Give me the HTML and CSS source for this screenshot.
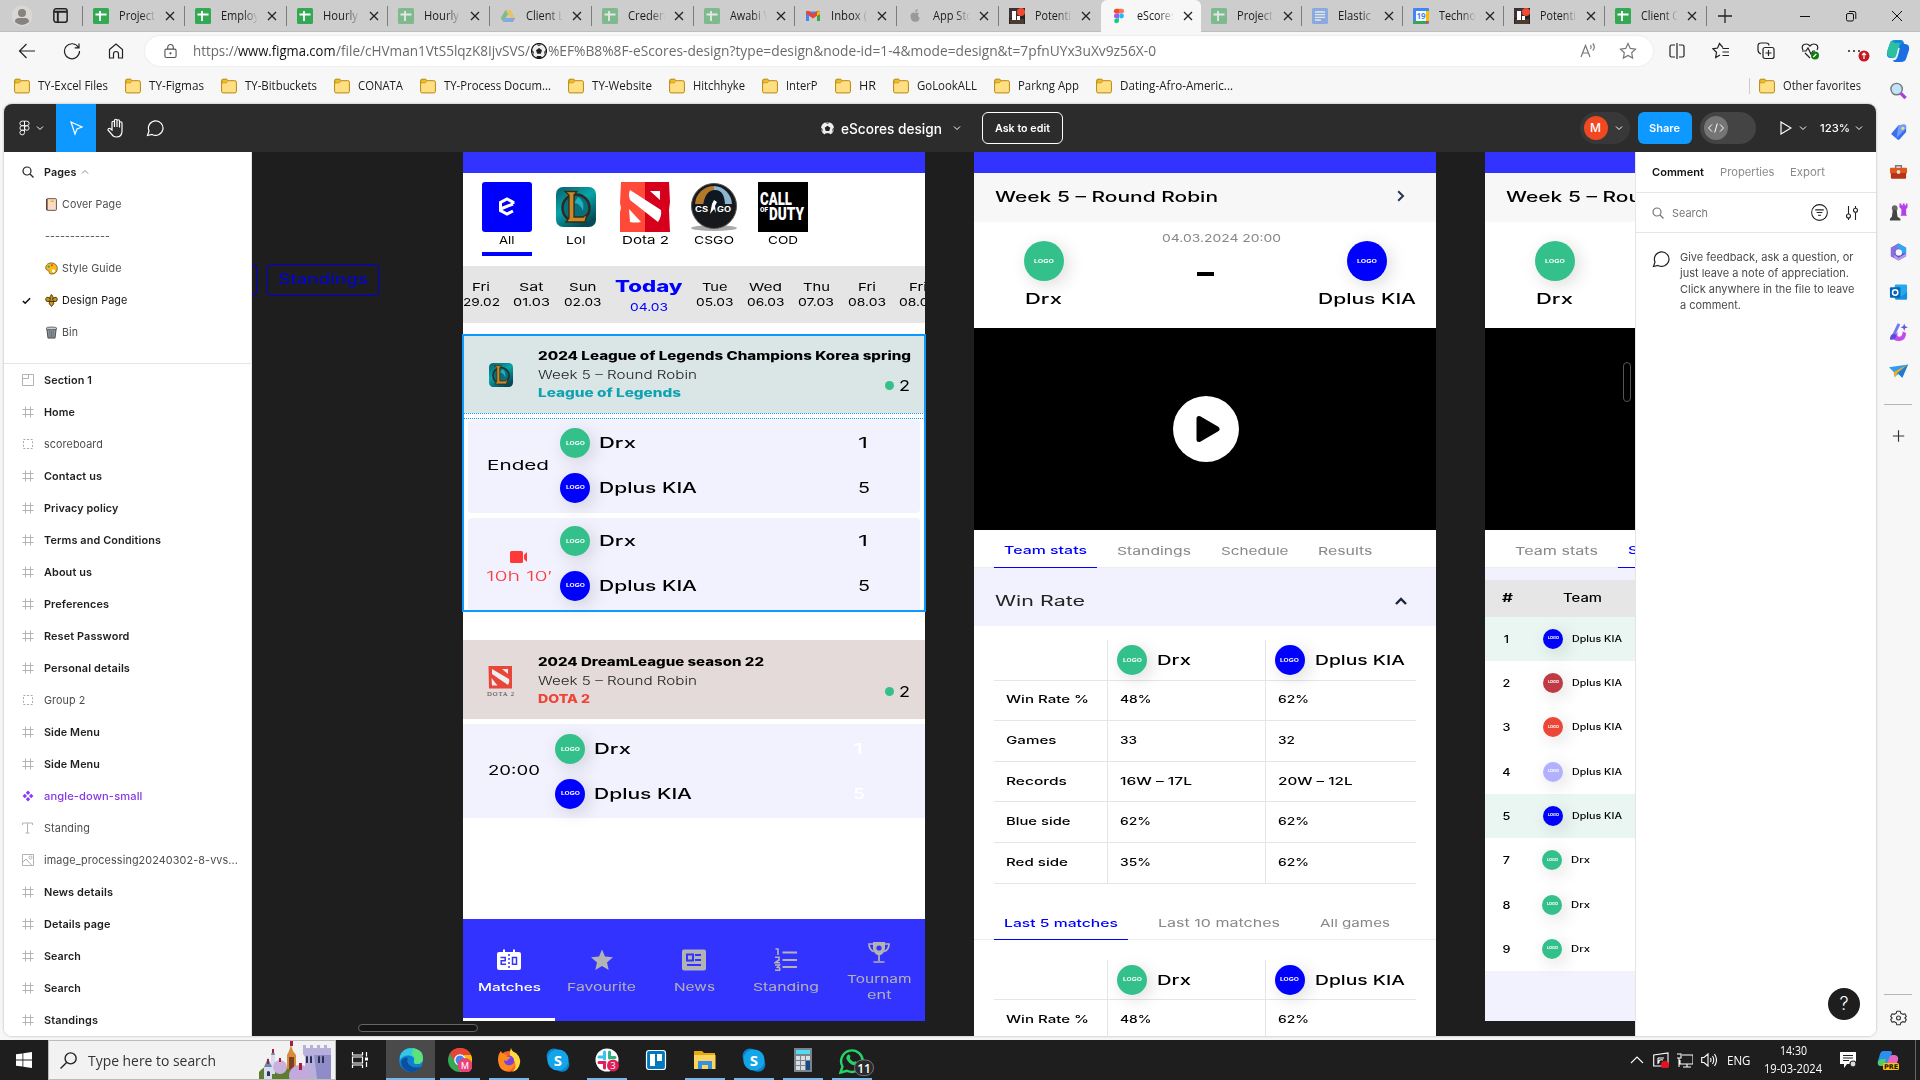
FILE: index.html
```html
<!DOCTYPE html>
<html lang="en">
<head>
<meta charset="utf-8">
<title>eScores design – Figma</title>
<link rel="stylesheet" href="styles.css">
</head>
<body>
<svg class="defs" aria-hidden="true">
  <symbol id="sheet" viewBox="0 0 16 16"><rect width="16" height="16" rx="1.5" fill="#34a853"/><path d="M2.5 6.5h11M7 3v10" stroke="#fff" stroke-width="1.8"/></symbol>
  <symbol id="folder" viewBox="0 0 16 16"><path d="M.6 3.8V2.6Q.6 1.2 2 1.200h3.600l1.600 1.500h6.600q1.600 0 1.600 1.500v9.200q0 1.500-1.600 1.500H2.200Q.6 14.900.6 13.400z" fill="#ffdf82" stroke="#b8860b"/><path d="M1 4.900h4.200l1.800-2-1.400-1.300H2Q1 1.600 1 2.600z" fill="#eebf30" stroke="#b8860b" stroke-width=".6"/></symbol>
  <symbol id="chev" viewBox="0 0 8 8"><path d="M1 2.500 4 5.500 7 2.500" fill="none" stroke="currentColor"/></symbol>
  <symbol id="hash" viewBox="0 0 12 12"><path d="M3.500.5v11M8.500.5v11M.5 3.500h11M.5 8.500h11" stroke="#b3b3b3" fill="none"/></symbol>
  <symbol id="dash" viewBox="0 0 12 12"><rect x="1.500" y="1.500" width="9" height="9" fill="none" stroke="#a8a8a8" stroke-dasharray="2 1.600"/></symbol>
  <symbol id="x" viewBox="0 0 10 10"><path d="M1 1l8 8M9 1l-8 8" stroke="#222" stroke-width="1.300"/></symbol>
  <symbol id="bubble" viewBox="0 0 18 18"><path d="M1.500 16.500 3 12A7.300 7.300 0 1 1 6 15.400L1.500 16.500z" fill="none" stroke="currentColor" stroke-width="1.200"/></symbol>
  <symbol id="mag" viewBox="0 0 12 12"><circle cx="5" cy="5" r="4" fill="none" stroke="currentColor" stroke-width="1.200"/><path d="M8 8l3.500 3.500" stroke="currentColor" stroke-width="1.200"/></symbol>
  <symbol id="lol" viewBox="0 0 40 40"><defs><linearGradient id="lg" x2=".6" y2="1"><stop stop-color="#075f6c"/><stop offset=".5" stop-color="#08a5aa"/><stop offset="1" stop-color="#044b57"/></linearGradient></defs><rect width="40" height="40" rx="7" fill="url(#lg)"/><circle cx="20" cy="21" r="13.500" fill="#08707c" stroke="#2c2a22" stroke-width="2.500"/><path d="M22 10q7 4 5 14-3-8-9-8z" fill="#1fb0b8"/><path d="M9 4.500h12l-3 3.500V30h9l4-3-2 8H10l3-4V8z" fill="#c98a2b" stroke="#3a2a10" stroke-width="1.300"/></symbol>
  <symbol id="photo" viewBox="0 0 16 16"><rect width="16" height="16" fill="#2b2024"/><rect width="9" height="10" fill="#3d3036"/><path d="M1 11h14v5H1z" fill="#4a3a30"/><path d="M3 3h4v9H3zM8 8h3v4H8z" fill="#fff"/><circle cx="12" cy="4" r="4" fill="#ee4b35"/></symbol>
  <symbol id="skype" viewBox="0 0 24 24"><circle cx="8" cy="8" r="7.500" fill="#0a84c8"/><circle cx="16" cy="16.500" r="7.300" fill="#0a84c8"/><circle cx="12" cy="12" r="10.600" fill="#12a5ea"/><text x="12" y="17.500" text-anchor="middle" font-family="Open Sans,sans-serif" font-weight="700" font-size="15" fill="#fff">S</text></symbol>
  <symbol id="ball" viewBox="0 0 16 16"><circle cx="8" cy="8" r="7.500" fill="#eee" stroke="#111"/><path d="M8 5l3 2.200-1.200 3.500H6.200L5 7.200zM5 1.500 8 3l3-1.500zM.7 7l2 1.500L2.500 12zM15.300 7l-2 1.500.2 3.500zM5 15l1-2h4l1 2z" fill="#222"/></symbol>
</svg>

<header class="tabs">
  <svg class="profile" viewBox="0 0 22 22"><circle cx="11" cy="11" r="10.500" fill="#dad6d2"/><circle cx="11" cy="8" r="4" fill="#858381"/><path d="M4 17q0-4 4-4h6q4 0 4 4-7 6-14 0z" fill="#858381"/></svg>
  <svg class="workspace" viewBox="0 0 14 14"><rect x=".8" y=".8" width="12.400" height="12.400" rx="2" fill="none" stroke="#222" stroke-width="1.400"/><path d="M1 3.500h12M4.500 3.500v9.500" stroke="#222" stroke-width="1.800"/></svg>
  <div class="tab"><svg><use href="#sheet"/></svg><b><i data-w="36">Project</i></b><svg class="x"><use href="#x"/></svg></div>
  <div class="tab"><svg><use href="#sheet"/></svg><b><i data-w="38">Employ</i></b><svg class="x"><use href="#x"/></svg></div>
  <div class="tab"><svg><use href="#sheet"/></svg><b><i data-w="35">Hourly</i></b><svg class="x"><use href="#x"/></svg></div>
  <div class="tab idle"><svg><use href="#sheet"/></svg><b><i data-w="35">Hourly</i></b><svg class="x"><use href="#x"/></svg></div>
  <div class="tab idle"><svg viewBox="0 0 16 16"><path d="M5.500 2h5L8 6.200 3.200 14 .7 10z" fill="#34a853"/><path d="M5.500 2h5l5 8.300h-5z" fill="#fbbc04"/><path d="M5.600 10h9.800L13 14H3.200z" fill="#4285f4"/></svg><b><i data-w="38">Client L</i></b><svg class="x"><use href="#x"/></svg></div>
  <div class="tab idle"><svg><use href="#sheet"/></svg><b><i data-w="38">Creden</i></b><svg class="x"><use href="#x"/></svg></div>
  <div class="tab idle"><svg><use href="#sheet"/></svg><b><i data-w="40">Awabi V</i></b><svg class="x"><use href="#x"/></svg></div>
  <div class="tab"><svg viewBox="0 0 16 16"><path d="M1 3.500V13h3V7l4 3 4-3v6h3V3.500z" fill="#4285f4"/><path d="M12 7v6h3V4z" fill="#34a853"/><path d="M1 3.500Q3 2 4.500 3.500L8 6l3.500-2.500Q13 2 15 3.500v2L8 10.500l-7-5z" fill="#ea4335"/><path d="M12 4.500Q14 2 15 4v2l-3 2z" fill="#fbbc04"/></svg><b><i data-w="36">Inbox (</i></b><svg class="x"><use href="#x"/></svg></div>
  <div class="tab"><svg viewBox="0 0 16 16"><path d="M10.800 1q.2 2.500-2.600 3.200Q8 1.800 10.800 1zM8.200 5q2-1.100 3.800.4-2.300 2 .8 4.800-1.800 4.600-4.300 3.200-2.600 1.600-4.300-2.200Q2.500 6.500 5 5q1.400-.8 3.200 0z" fill="#999"/></svg><b><i data-w="40">App Sto</i></b><svg class="x"><use href="#x"/></svg></div>
  <div class="tab"><svg><use href="#photo"/></svg><b><i data-w="36">Potenti</i></b><svg class="x"><use href="#x"/></svg></div>
  <div class="tab active"><svg viewBox="0 0 16 16"><path d="M8 .8H5.300a2.400 2.400 0 0 0 0 4.800H8z" fill="#f24e1e"/><path d="M8 .8h2.700a2.400 2.400 0 0 1 0 4.800H8z" fill="#ff7262"/><path d="M8 5.600H5.300a2.400 2.400 0 0 0 0 4.800H8z" fill="#a259ff"/><circle cx="10.500" cy="8" r="2.400" fill="#1abcfe"/><path d="M8 10.400H5.300A2.400 2.400 0 1 0 8 12.800z" fill="#0acf83"/></svg><b><i data-w="39">eScores</i></b><svg class="x"><use href="#x"/></svg></div>
  <div class="tab idle late"><svg><use href="#sheet"/></svg><b><i data-w="36">Project</i></b><svg class="x"><use href="#x"/></svg></div>
  <div class="tab idle late"><svg viewBox="0 0 16 16"><rect width="16" height="16" rx="1.500" fill="#4a86f0"/><path d="M3 4h10M3 6.700h10M3 9.400h10M3 12h6" stroke="#fff" stroke-width="1.300"/></svg><b><i data-w="33">Elastic</i></b><svg class="x"><use href="#x"/></svg></div>
  <div class="tab late"><svg viewBox="0 0 16 16"><rect width="16" height="16" rx="1" fill="#4285f4"/><path d="M13 3h3v10h-3z" fill="#fbbc04"/><path d="M0 13h13v3H0z" fill="#34a853"/><path d="M13 13h3l-3 3z" fill="#ea4335"/><path d="M3 3h10v10H3z" fill="#fff"/><text x="8" y="11" text-anchor="middle" font-size="8" font-weight="700" font-family="Open Sans,sans-serif" fill="#4285f4">19</text></svg><b><i data-w="37">Techno</i></b><svg class="x"><use href="#x"/></svg></div>
  <div class="tab late"><svg><use href="#photo"/></svg><b><i data-w="36">Potenti</i></b><svg class="x"><use href="#x"/></svg></div>
  <div class="tab late"><svg><use href="#sheet"/></svg><b><i data-w="38">Client C</i></b><svg class="x"><use href="#x"/></svg></div>
  <div class="newtab"><svg viewBox="0 0 14 14"><path d="M7 0v14M0 7h14" stroke="#222" stroke-width="1.300"/></svg></div>
  <div class="winctl">
    <svg viewBox="0 0 12 12"><path d="M1 6.500h10" stroke="#111"/></svg>
    <svg viewBox="0 0 12 12"><rect x="1.500" y="3.500" width="7" height="7.500" rx="1.500" fill="none" stroke="#111"/><path d="M4 1.500h5q1.800 0 1.800 1.800V9" fill="none" stroke="#111"/></svg>
    <svg viewBox="0 0 12 12"><path d="M1 1l10 10M11 1L1 11" stroke="#111"/></svg>
  </div>
</header>

<div class="navbar">
  <svg viewBox="0 0 18 18"><path d="M17 9H1.500M8.500 2l-7 7 7 7" /></svg>
  <svg viewBox="0 0 18 18"><path d="M15.500 5.500A7.500 7.500 0 1 0 16.500 9M16 1.500v4.300h-4.300"/></svg>
  <svg viewBox="0 0 18 18"><path d="M2.500 7.500 9 2l6.500 5.500V16H11.500v-4q0-2.500-2.500-2.500T6.500 12v4h-4z"/></svg>
  <div class="address">
    <svg class="lock" viewBox="0 0 14 16"><rect x="1" y="6" width="12" height="9" rx="1.500"/><path d="M4 6V4a3 3 0 0 1 6 0v2"/><circle cx="7" cy="10.500" r=".6" fill="#555"/></svg>
    <span class="url"><i data-w="45.500">https://</i><i class="host" data-w="97.500">www.figma.com</i><i data-w="194">/file/cHVman1VtS5lqzK8IjvSVS/</i><svg><use href="#ball"/></svg><i data-w="608">%EF%B8%8F-eScores-design?type=design&amp;node-id=1-4&amp;mode=design&amp;t=7pfnUYx3uXv9z56X-0</i></span>
    <svg class="aloud" viewBox="0 0 18 18"><path d="M2 15 6.500 3.500 11 15M3.500 11h6M11.500 3q1.500 2 0 4M13.800 1.500q3 3.500 0 7"/></svg>
    <svg class="star" viewBox="0 0 18 18"><path d="M9 1.500l2.300 4.900 5.200.7-3.800 3.700.9 5.300L9 13.500l-4.600 2.600.9-5.300L1.500 7.100l5.200-.7z"/></svg>
  </div>
  <div class="tools">
    <svg viewBox="0 0 18 18"><path d="M7 3H3.500Q2 3 2 4.500v9Q2 15 3.500 15H7M11 3h3.500Q16 3 16 4.500v9q0 1.500-1.500 1.500H11M9 1v16"/></svg>
    <svg viewBox="0 0 18 18"><path d="M11 5.700 7.500 1.500 5.600 6 1 6.800l3.500 3.500-.8 5.200L8 13M10.500 6.500H17M10.500 10H17M10.500 13.500H17"/></svg>
    <svg viewBox="0 0 18 18"><path d="M4 12Q1 11 1 8V4q0-3 3-3h5q3 0 3 2.500"/><rect x="6" y="5.500" width="11" height="11" rx="2"/><path d="M11.500 8v6M8.500 11h6"/></svg>
    <svg viewBox="0 0 18 18"><path d="M2 8Q0 4 3 2.500 6.500 1 9 4q2.500-3 6-1.500Q18 4 16 8M1 9h4l2-3 3 6 2-3h2M4 11l5 5"/><circle cx="14" cy="13.500" r="4" fill="#107c10" stroke="none"/><path d="M12.300 15l3-3" stroke="#fff"/></svg>
    <svg class="more" viewBox="0 0 24 24"><circle cx="3" cy="12" r="1" fill="#222" stroke="none"/><circle cx="8" cy="12" r="1" fill="#222" stroke="none"/><circle cx="13" cy="12" r="1" fill="#222" stroke="none"/><circle cx="18" cy="17" r="5.500" fill="#c4191f" stroke="none"/><path d="M18 20v-6M16 16l2-2 2 2" stroke="#fff"/></svg>
    <svg class="copilot" viewBox="0 0 24 24"><path d="M9 1h6q2 0 2.600 2L20 9 12 13 8 19H5Q0 19 1 13L4 4Q5 1 9 1z" fill="#1489d8"/><path d="M9 4h5L10 18Q9 22 5 18 1 18 1 13l3-9Q5 1 9 4z" fill="#2cc0a0"/><path d="M15 5h4q5 0 4 6l-3 9q-1 3-5 3H9q-2 0-2-2 3 1 4-3z" fill="#1b6fe0"/><path d="M13 9l-2 8q-1 3-4 3" stroke="#e8f6ff" stroke-width="1.500"/></svg>
  </div>
</div>

<nav class="bookmarks">
  <span><svg><use href="#folder"/></svg><i data-w="70">TY-Excel Files</i></span>
  <span><svg><use href="#folder"/></svg><i data-w="55">TY-Figmas</i></span>
  <span><svg><use href="#folder"/></svg><i data-w="72">TY-Bitbuckets</i></span>
  <span><svg><use href="#folder"/></svg><i data-w="45">CONATA</i></span>
  <span><svg><use href="#folder"/></svg><i data-w="107">TY-Process Docum...</i></span>
  <span><svg><use href="#folder"/></svg><i data-w="60">TY-Website</i></span>
  <span><svg><use href="#folder"/></svg><i data-w="52">Hitchhyke</i></span>
  <span><svg><use href="#folder"/></svg><i data-w="31.500">InterP</i></span>
  <span><svg><use href="#folder"/></svg><i data-w="17">HR</i></span>
  <span><svg><use href="#folder"/></svg><i data-w="60">GoLookALL</i></span>
  <span><svg><use href="#folder"/></svg><i data-w="61">Parkng App</i></span>
  <span><svg><use href="#folder"/></svg><i data-w="113">Dating-Afro-Americ...</i></span>
  <span class="other"><svg><use href="#folder"/></svg><i data-w="78">Other favorites</i></span>
</nav>

<div class="middle">
<main class="figma">
  <div class="ftool">
    <div class="fmenu"><svg class="flogo" viewBox="0 0 12 16"><g fill="none" stroke="#fff"><path d="M6 .5H3.500a2.500 2.500 0 0 0 0 5H6zM6 .5h2.500a2.500 2.500 0 0 1 0 5H6zM6 5.500H3.500a2.500 2.500 0 0 0 0 5H6z"/><circle cx="8.500" cy="8" r="2.500"/><path d="M6 10.500H3.500A2.500 2.500 0 1 0 6 13z"/></g></svg><svg class="c8"><use href="#chev"/></svg></div>
    <div class="fsel"><svg viewBox="0 0 16 16"><path d="M3 2l11 5-5 2-2 5z" fill="none" stroke="#fff" stroke-width="1.200"/></svg></div>
    <div class="fbtn"><svg viewBox="0 0 20 20"><path d="M6 12V4.500a1.200 1.200 0 0 1 2.500 0V9 2.500a1.200 1.200 0 0 1 2.500 0V9 3a1.200 1.200 0 0 1 2.500 0v6.500V5a1.200 1.200 0 0 1 2.500 0v8q0 6-5.500 6-3.500 0-5-3l-3.500-4q0-2 2-1.500z" fill="none" stroke="#fff" stroke-width="1.200"/></svg></div>
    <div class="fbtn"><svg class="s18"><use href="#bubble"/></svg></div>
    <div class="ftitle"><svg><use href="#ball"/></svg><i data-w="101">eScores design</i><svg class="c8"><use href="#chev"/></svg><span class="ask"><i data-w="55">Ask to edit</i></span></div>
    <div class="fright">
      <div class="who"><em>M</em><svg class="c8"><use href="#chev"/></svg></div>
      <div class="share"><i data-w="31">Share</i></div>
      <div class="toggle"><svg viewBox="0 0 24 24"><circle cx="12" cy="12" r="12" fill="#757575"/><path d="M8 8.500 4.500 12 8 15.500M16 8.500l3.500 3.500-3.500 3.500M13.300 7.500l-2.600 9" fill="none" stroke="#fff"/></svg></div>
      <svg class="play" viewBox="0 0 12 14"><path d="M1 1l10 6-10 6z" fill="none" stroke="#fff" stroke-width="1.200"/></svg>
      <svg class="c8"><use href="#chev"/></svg>
      <i class="zoom" data-w="30">123%</i>
      <svg class="c8 last"><use href="#chev"/></svg>
    </div>
  </div>

  <div class="fbody">
    <aside class="left">
      <div class="pages">
        <div class="row strong"><svg class="dark"><use href="#mag"/></svg><i data-w="32.500">Pages</i><svg class="c8 up"><use href="#chev"/></svg></div>
        <div class="row page"><svg viewBox="0 0 12 14"><rect x=".7" y=".7" width="10.600" height="12.600" rx="1" fill="#fadcc6" stroke="#5c4a40"/><path d="M1 1v12" stroke="#5c3a2a" stroke-width="1.500"/><path d="M5 3.500h3.500" stroke="#f0b400" stroke-width="1.800"/></svg><i data-w="59.500">Cover Page</i></div>
        <div class="row page"><i data-w="65">-------------</i></div>
        <div class="row page"><svg viewBox="0 0 14 14"><path d="M7 1C2 1 .5 4.500.8 7 1.200 9 3 8.500 4 9.500c1 1.200 0 3.500 3 3.500 4 0 6.300-2.500 6.300-6S10.500 1 7 1z" fill="#fbb81b" stroke="#5c4a20" stroke-width=".8"/><circle cx="4" cy="5" r="1.200" fill="#34a853"/><circle cx="7.500" cy="3.500" r="1.200" fill="#ea4335"/><circle cx="9" cy="9.500" r="1.700" fill="#fff"/></svg><i data-w="59.500">Style Guide</i></div>
        <div class="row page current"><svg class="tick" viewBox="0 0 10 10"><path d="M1 5.500 3.500 8 9 2.500" fill="none" stroke="#111" stroke-width="1.800"/></svg><svg viewBox="0 0 14 14"><path d="M7 .5q3 3 1.200 5.500Q9 3 12 3.500q2 1 .8 4-2 1.500-4-.2l.7 3.200-2.500 3-2.500-3 .7-3.200q-2 1.700-4 .2-1.200-3 .8-4Q5 3 5.800 6 4 3.500 7 .5z" fill="#c9951e" stroke="#3d2c08" stroke-width=".9"/><path d="M3.500 8h7" stroke="#3d2c08"/></svg><i data-w="65.500">Design Page</i></div>
        <div class="row page"><svg viewBox="0 0 14 14"><path d="M2 3h10l-1.200 10H3.200z" fill="#8b949a" stroke="#444"/><ellipse cx="7" cy="2.600" rx="5.800" ry="1.500" fill="#c8cdd0" stroke="#444" stroke-width=".8"/><path d="M5 5l.5 7M7 5v7M9 5l-.5 7" stroke="#5d6468" stroke-width=".7"/></svg><i data-w="16">Bin</i></div>
      </div>
      <div class="layers">
        <div class="row strong"><svg viewBox="0 0 12 12"><path d="M.5.5h11v11H.5zM.5 4.500h6v-4" fill="none" stroke="#b3b3b3"/></svg><i data-w="48">Section 1</i></div>
        <div class="row strong"><svg><use href="#hash"/></svg><i data-w="31">Home</i></div>
        <div class="row"><svg><use href="#dash"/></svg><i data-w="59">scoreboard</i></div>
        <div class="row strong"><svg><use href="#hash"/></svg><i data-w="58">Contact us</i></div>
        <div class="row strong"><svg><use href="#hash"/></svg><i data-w="74.500">Privacy policy</i></div>
        <div class="row strong"><svg><use href="#hash"/></svg><i data-w="117">Terms and Conditions</i></div>
        <div class="row strong"><svg><use href="#hash"/></svg><i data-w="48">About us</i></div>
        <div class="row strong"><svg><use href="#hash"/></svg><i data-w="65">Preferences</i></div>
        <div class="row strong"><svg><use href="#hash"/></svg><i data-w="85.500">Reset Password</i></div>
        <div class="row strong"><svg><use href="#hash"/></svg><i data-w="86">Personal details</i></div>
        <div class="row"><svg><use href="#dash"/></svg><i data-w="41.500">Group 2</i></div>
        <div class="row strong"><svg><use href="#hash"/></svg><i data-w="56">Side Menu</i></div>
        <div class="row strong"><svg><use href="#hash"/></svg><i data-w="56">Side Menu</i></div>
        <div class="row comp"><svg viewBox="0 0 12 12"><path d="M6 .6 8.200 2.800 6 5 3.800 2.800zM6 7l2.200 2.200L6 11.400 3.800 9.200zM2.800 3.800 5 6 2.800 8.200.6 6zM9.200 3.800 11.400 6 9.200 8.200 7 6z" fill="#8a38f5"/></svg><i data-w="98.500">angle-down-small</i></div>
        <div class="row"><svg viewBox="0 0 12 12"><path d="M.5 3V1h10v2M5.500 1v10M3.500 11h4" fill="none" stroke="#b3b3b3"/></svg><i data-w="46">Standing</i></div>
        <div class="row"><svg viewBox="0 0 12 12"><path d="M.5.5h11v11H.5zM1 8l3-3 5.500 6" fill="none" stroke="#b3b3b3"/><circle cx="8.500" cy="3.500" r="1.500" fill="none" stroke="#b3b3b3"/></svg><i data-w="194">image_processing20240302-8-vvs...</i></div>
        <div class="row strong"><svg><use href="#hash"/></svg><i data-w="69">News details</i></div>
        <div class="row strong"><svg><use href="#hash"/></svg><i data-w="66.500">Details page</i></div>
        <div class="row strong"><svg><use href="#hash"/></svg><i data-w="37">Search</i></div>
        <div class="row strong"><svg><use href="#hash"/></svg><i data-w="37">Search</i></div>
        <div class="row strong"><svg><use href="#hash"/></svg><i data-w="54">Standings</i></div>
      </div>
    </aside>

    <section class="canvas">
      <div class="label-cut"></div>
      <div class="label"><i data-w="90">Standings</i></div>

      <article class="board home">
        <div class="bluebar"></div>
        <div class="games">
          <div class="game on"><svg viewBox="0 0 50 50"><rect width="50" height="50" rx="3" fill="#00f"/><path d="M31 22v-1.800L25 17l-6.500 3.500v8L25 32l6-3M18.500 27l12.500-5" fill="none" stroke="#fff" stroke-width="3"/></svg><i data-w="15.500">All</i></div>
          <div class="game"><svg viewBox="-5 -5 50 50"><use href="#lol" width="40" height="40"/></svg><i data-w="19.500">Lol</i></div>
          <div class="game"><svg viewBox="0 0 50 50"><path d="M1 0h24v50H0V30l1-4-1-5z" fill="#ff4a3a"/><path d="M25 0h24l1 20-1 8 1 22H25z" fill="#d6001c"/><path d="M10 8l31 20q1 6-3 12L10 18q-2-6 0-10zM30 9h10v9zM9 27l12 13q-6 1-11 0z" fill="#fff"/></svg><i data-w="47">Dota 2</i></div>
          <div class="game"><svg viewBox="0 0 50 50"><ellipse cx="25" cy="46" rx="23" ry="3" fill="#aaa"/><circle cx="25" cy="24" r="22.500" fill="#16181b" stroke="#555"/><path d="M6 22A19 19 0 0 1 25 4v18z" fill="#b3782a"/><path d="M25 4a19 19 0 0 1 18 18H25z" fill="#8db6cc"/><path d="M14 24q2-16 12-16t10 16z" fill="#0d1822"/><path d="M25 18l3 2-2 4 1 7-2-4-4 5 2-10z" fill="#fff"/><text x="6" y="29.500" font-family="Inter,sans-serif" font-weight="700" font-size="7" textLength="13" lengthAdjust="spacingAndGlyphs" fill="#fff">CS</text><text x="28" y="29.500" font-family="Inter,sans-serif" font-weight="700" font-size="7" textLength="14" lengthAdjust="spacingAndGlyphs" fill="#fff">GO</text></svg><i data-w="40">CSGO</i></div>
          <div class="game"><svg viewBox="0 0 50 50"><rect width="50" height="50" fill="#000"/><g font-family="Roboto,sans-serif" font-weight="900" fill="#fff"><text x="2" y="22.500" font-size="17.500" textLength="32" lengthAdjust="spacingAndGlyphs">CALL</text><text x="2" y="30" font-size="7" textLength="8" lengthAdjust="spacingAndGlyphs">OF</text><text x="11" y="38" font-size="17.500" textLength="35" lengthAdjust="spacingAndGlyphs">DUTY</text></g></svg><i data-w="30">COD</i></div>
        </div>
        <div class="days">
          <div><i data-w="18">Fri</i><i data-w="37">29.02</i></div>
          <div><i data-w="24.500">Sat</i><i data-w="37">01.03</i></div>
          <div><i data-w="27.500">Sun</i><i data-w="37.500">02.03</i></div>
          <div class="today"><i data-w="67.500">Today</i><i data-w="38">04.03</i></div>
          <div><i data-w="25.500">Tue</i><i data-w="37.500">05.03</i></div>
          <div><i data-w="33">Wed</i><i data-w="37.500">06.03</i></div>
          <div><i data-w="27">Thu</i><i data-w="36">07.03</i></div>
          <div><i data-w="18">Fri</i><i data-w="38">08.03</i></div>
          <div><i data-w="18">Fri</i><i data-w="38">08.03</i></div>
        </div>
        <div class="league lolbg">
          <svg class="lmark"><use href="#lol"/></svg>
          <div class="ltext"><i class="bold" data-w="373">2024 League of Legends Champions Korea spring</i><i class="thin" data-w="159">Week 5 – Round Robin</i><i class="bold teal" data-w="143">League of Legends</i></div>
          <div class="count"><u></u><i data-w="11">2</i></div>
        </div>
        <div class="match boxed">
          <div class="status"><i data-w="62">Ended</i></div>
          <div class="teams">
            <div><span class="logo"><i data-w="19">LOGO</i></span><i class="name" data-w="37">Drx</i></div>
            <div><span class="logo blue"><i data-w="19">LOGO</i></span><i class="name" data-w="98">Dplus KIA</i></div>
          </div>
          <div class="score"><i data-w="10">1</i><i data-w="12">5</i></div>
        </div>
        <div class="match boxed">
          <div class="status live"><svg viewBox="0 0 17 12"><rect width="13" height="12" rx="1.500" fill="#ff3838"/><path d="M17 1v10l-3-3V4z" fill="#ff3838"/></svg><i data-w="66">10h 10′</i></div>
          <div class="teams">
            <div><span class="logo"><i data-w="19">LOGO</i></span><i class="name" data-w="37">Drx</i></div>
            <div><span class="logo blue"><i data-w="19">LOGO</i></span><i class="name" data-w="98">Dplus KIA</i></div>
          </div>
          <div class="score"><i data-w="10">1</i><i data-w="12">5</i></div>
        </div>
        <div class="league dotabg">
          <svg class="lmark dota" viewBox="0 0 27 31"><path d="M1.500 1h23.500v22.500H2z" fill="#e8463a"/><path d="M5 4l17 10q1 3-1 6L5 9zM15 4h6v5zM4.500 13l6 7.500H5z" fill="#eee"/><text x="0" y="30.500" textLength="27" font-family="Liberation Serif,serif" font-size="6.500" fill="#444">DOTA 2</text></svg>
          <div class="ltext"><i class="bold" data-w="226">2024 DreamLeague season 22</i><i class="thin" data-w="159">Week 5 – Round Robin</i><i class="bold red" data-w="52">DOTA 2</i></div>
          <div class="count"><u></u><i data-w="11">2</i></div>
        </div>
        <div class="match full">
          <div class="status"><i data-w="52">20:00</i></div>
          <div class="teams">
            <div><span class="logo"><i data-w="19">LOGO</i></span><i class="name" data-w="37">Drx</i></div>
            <div><span class="logo blue"><i data-w="19">LOGO</i></span><i class="name" data-w="98">Dplus KIA</i></div>
          </div>
          <div class="score"><i data-w="10">1</i><i data-w="12">5</i></div>
        </div>
        <div class="bottomnav">
          <div class="on"><svg viewBox="0 0 24 24"><path d="M2 4h4V1.500h2V4h8V1.500h2V4h4q2 0 2 2v14q0 2-2 2H2q-2 0-2-2V6q0-2 2-2z" fill="#fff"/><path d="M3.500 9.500h4.700v3.200H4.200v3.500h4.800M15.500 9.500h4v6.700h-4zM12 6v2M12 10v2M12 14v2M12 18v2" fill="none" stroke="#33f" stroke-width="1.500"/></svg><i data-w="63">Matches</i></div>
          <div><svg viewBox="0 0 24 24"><path d="M12 1.500l3 7 8 .8-6 5.200 1.700 7.500-6.700-4-6.700 4L7 14.500 1 9.300l8-.8z" fill="#b3b3b3"/></svg><i data-w="69">Favourite</i></div>
          <div><svg viewBox="0 0 24 24"><rect y="1.500" width="24" height="21" rx="2" fill="#b3b3b3"/><path d="M5 6.500h6v6H5zM13 7h6M13 12h6M5 17h14" fill="none" stroke="#33f" stroke-width="2"/></svg><i data-w="41">News</i></div>
          <div><svg viewBox="0 0 24 24"><path d="M8.500 4.500H23M8.500 12H23M8.500 19H23" fill="none" stroke="#b3b3b3" stroke-width="2"/><path d="M1.500 1H4v6M1 9.200h4V12l-4 2.800h5M1 17h4.500L3.500 19.300q3 0 2 3H1" fill="none" stroke="#b3b3b3" stroke-width="1.600"/></svg><i data-w="66">Standing</i></div>
          <div><svg viewBox="0 0 24 24"><path d="M6 2h12v7q-1 4-4 6h-4Q7 13 6 9z" fill="#b3b3b3"/><path d="M6 4H2q0 6 5 7.500M18 4h4q0 6-5 7.500M12 14v7M6.500 22h11" fill="none" stroke="#b3b3b3" stroke-width="1.700"/><circle cx="12" cy="8" r="2.600" fill="#33f"/></svg><i data-w="64.500">Tournam</i><i data-w="24.500">ent</i></div>
        </div>
      </article>
      <div class="selection"></div>
      <div class="spacing"></div>

      <article class="board detail">
        <div class="bluebar"></div>
        <div class="week"><i data-w="223">Week 5 – Round Robin</i><svg viewBox="0 0 8 12"><path d="M1.200 1.200 6 6l-4.800 4.800" fill="none" stroke="#2b3354" stroke-width="2"/></svg></div>
        <div class="versus">
          <div class="side"><span class="logo big"><i data-w="20">LOGO</i></span><i class="name" data-w="37">Drx</i></div>
          <div class="when"><i data-w="119">04.03.2024 20:00</i><s></s></div>
          <div class="side r"><span class="logo big blue"><i data-w="20">LOGO</i></span><i class="name" data-w="98">Dplus KIA</i></div>
        </div>
        <div class="video"><svg viewBox="0 0 66 66"><circle cx="33" cy="33" r="33" fill="#fff"/><path d="M26 22.500v21l18-10.500z" fill="#000" stroke="#000" stroke-width="5" stroke-linejoin="round"/></svg></div>
        <div class="dtabs"><span class="sel"><i data-w="83">Team stats</i></span><span><i data-w="74">Standings</i></span><span><i data-w="67.500">Schedule</i></span><span><i data-w="54.500">Results</i></span></div>
        <div class="accordion"><i data-w="90">Win Rate</i><svg viewBox="0 0 12 8"><path d="M1 7l5-5 5 5" fill="none" stroke="#1c2340" stroke-width="2.400"/></svg></div>
        <div class="stats">
          <div class="hd"><p></p><p><span class="logo"><i data-w="19">LOGO</i></span><i class="name" data-w="34">Drx</i></p><p><span class="logo blue"><i data-w="19">LOGO</i></span><i class="name" data-w="90">Dplus KIA</i></p></div>
          <div><p><i data-w="83">Win Rate %</i></p><p><i data-w="31.500">48%</i></p><p><i data-w="31">62%</i></p></div>
          <div><p><i data-w="50.500">Games</i></p><p><i data-w="17">33</i></p><p><i data-w="17">32</i></p></div>
          <div><p><i data-w="61">Records</i></p><p><i data-w="72">16W – 17L</i></p><p><i data-w="74.500">20W – 12L</i></p></div>
          <div><p><i data-w="64.500">Blue side</i></p><p><i data-w="31">62%</i></p><p><i data-w="31">62%</i></p></div>
          <div><p><i data-w="62">Red side</i></p><p><i data-w="31">35%</i></p><p><i data-w="31">62%</i></p></div>
        </div>
        <div class="dtabs second"><span class="sel"><i data-w="114">Last 5 matches</i></span><span><i data-w="122">Last 10 matches</i></span><span><i data-w="70">All games</i></span></div>
        <div class="stats lower">
          <div class="hd"><p></p><p><span class="logo"><i data-w="19">LOGO</i></span><i class="name" data-w="34">Drx</i></p><p><span class="logo blue"><i data-w="19">LOGO</i></span><i class="name" data-w="90">Dplus KIA</i></p></div>
          <div><p><i data-w="83">Win Rate %</i></p><p><i data-w="31.500">48%</i></p><p><i data-w="31">62%</i></p></div>
        </div>
      </article>

      <article class="board table">
        <div class="bluebar"></div>
        <div class="week"><i data-w="223">Week 5 – Round Robin</i></div>
        <div class="versus"><div class="side"><span class="logo big"><i data-w="20">LOGO</i></span><i class="name" data-w="37">Drx</i></div></div>
        <div class="video"></div>
        <div class="dtabs third"><span><i data-w="83">Team stats</i></span><span class="sel"><i data-w="74">Standings</i></span></div>
        <div class="thead"><b><i data-w="11">#</i></b><i data-w="39">Team</i></div>
        <div class="trow tint"><b>1</b><span class="logo sm blue"><i data-w="11">LOGO</i></span><i data-w="50">Dplus KIA</i></div>
        <div class="trow"><b>2</b><span class="logo sm crimson"><i data-w="11">LOGO</i></span><i data-w="50">Dplus KIA</i></div>
        <div class="trow"><b>3</b><span class="logo sm redc"><i data-w="11">LOGO</i></span><i data-w="50">Dplus KIA</i></div>
        <div class="trow"><b>4</b><span class="logo sm lilac"><i data-w="11">LOGO</i></span><i data-w="50">Dplus KIA</i></div>
        <div class="trow tint"><b>5</b><span class="logo sm blue"><i data-w="11">LOGO</i></span><i data-w="50">Dplus KIA</i></div>
        <div class="trow d"><b>7</b><span class="logo sm"><i data-w="11">LOGO</i></span><i data-w="19">Drx</i></div>
        <div class="trow d"><b>8</b><span class="logo sm"><i data-w="11">LOGO</i></span><i data-w="19">Drx</i></div>
        <div class="trow d"><b>9</b><span class="logo sm"><i data-w="11">LOGO</i></span><i data-w="19">Drx</i></div>
      </article>
      <div class="hscroll"></div>
      <div class="vscroll"></div>
    </section>

    <aside class="right">
      <div class="rtabs"><i class="cur" data-w="52">Comment</i><i data-w="54.500">Properties</i><i data-w="35">Export</i></div>
      <div class="rsearch"><svg class="m"><use href="#mag"/></svg><i data-w="36">Search</i>
        <svg class="filter" viewBox="0 0 16 16"><circle cx="8" cy="8" r="7.400"/><path d="M4 5.500h8M5.300 8h5.400M6.500 10.500h3"/></svg>
        <svg class="sliders" viewBox="0 0 14 16"><path d="M3.500 1v8M3.500 13v2M10.500 7.500V15M10.500 1v2"/><circle cx="3.500" cy="11" r="2"/><circle cx="10.500" cy="5.200" r="2"/></svg></div>
      <div class="rnote"><svg><use href="#bubble"/></svg><p><i data-w="173.500">Give feedback, ask a question, or</i><i data-w="169">just leave a note of appreciation.</i><i data-w="174.500">Click anywhere in the file to leave</i><i data-w="61">a comment.</i></p></div>
      <div class="help">?</div>
    </aside>
  </div>
</main>

<aside class="edgebar">
  <svg viewBox="0 0 20 20"><circle cx="8" cy="8" r="6" fill="#bfe3f8" stroke="#777" stroke-width="1.500"/><path d="M12.500 12.500l5 5" stroke="#b03de0" stroke-width="3.500"/></svg>
  <svg viewBox="0 0 20 20"><path d="M10 3l6-1q2 0 2 2v6l-7 8q-1 1-2 0L3 13q-1-1 0-2z" fill="#3f6df0"/><path d="M10 3l6-1q2 0 2 2v2L8 16z" fill="#6ea0ff"/><circle cx="14.500" cy="6" r="1.600" fill="#ffe04d"/></svg>
  <svg viewBox="0 0 20 20"><path d="M7 6V3.500h6V6" fill="none" stroke="#777" stroke-width="1.500"/><rect x="1" y="5.500" width="18" height="6" rx="1" fill="#e0561f"/><path d="M2 11h16v5q0 1-1 1H3q-1 0-1-1z" fill="#b63410"/><circle cx="10" cy="10" r="2" fill="#ddd"/></svg>
  <svg viewBox="0 0 20 20"><circle cx="6" cy="6" r="3" fill="#666"/><path d="M4 8h4l1 7 3 2v2H1v-2l2-2z" fill="#444"/><path d="M11 1h2v2h1.500V1h2v2H18V1h1.500v4L18 7v5l1 2h-7l1-2V7l-2-2z" fill="#b53fe8"/></svg>
  <svg viewBox="0 0 20 20"><path d="M10 1l8 4.500v9L10 19l-8-4.500v-9z" fill="#5a50c8"/><path d="M10 1L2 5.500v9l4 2.200V9l5-3z" fill="#8a6fe0"/><path d="M10 1l8 4.500v6l-4 0-1-4-5-2z" fill="#30a7f0"/><path d="M6 13l4 3 8-4.500v3L10 19l-5-3z" fill="#b79af0"/><circle cx="10.300" cy="10.500" r="3.400" fill="#f7f7f7"/></svg>
  <svg viewBox="0 0 20 20"><rect x="6" y="2" width="13" height="16" rx="1.500" fill="#28a8ea"/><path d="M6 11l6.500 4L19 10v7q0 1-1 1H7z" fill="#1490df"/><rect x="1" y="5" width="11" height="11" rx="1" fill="#0364b8"/><circle cx="6.500" cy="10.500" r="2.800" fill="none" stroke="#fff" stroke-width="1.600"/></svg>
  <svg viewBox="0 0 20 20"><path d="M3 15q2 5 8 4.500 7-1 7-8.500l-3.500-1.500Q14 15 10.500 15q-3-.5-1-5z" fill="#c44be8"/><path d="M10.500 1.500L5 13" stroke="#6e79f2" stroke-width="3"/><path d="M1 18q0-6 4-6t2 4q-2 3-6 2z" fill="#5b4bd8"/><path d="M16 1l1 3 3 1-3 1-1 3-1-3-3-1 3-1z" fill="#6a4fe0"/></svg>
  <svg viewBox="0 0 20 20"><path d="M0 5l20-3-6 14-4-4-4 3-1-5z" fill="#2f9df2"/><path d="M20 2L5 10l1 6 3-5z" fill="#f6a91b"/><path d="M20 2L9 11l5 5z" fill="#2079d4"/></svg>
  <hr>
  <svg class="add" viewBox="0 0 20 20"><path d="M10 4v12M4 10h12" stroke="#333" stroke-width="1.200"/></svg>
  <div class="gap"></div>
  <hr>
  <svg class="gear" viewBox="0 0 20 20"><path d="M8 2h4l.7 2.500 2.300 1.200 2.500-.7 1.700 3.200L17.500 10l1.700 1.800-1.700 3.200-2.500-.7-2.300 1.200L12 18H8l-.7-2.500L5 14.300l-2.500.7L.8 11.800 2.500 10 .8 8.200 2.500 5l2.500.7 2.300-1.200z" fill="none" stroke="#333" stroke-width="1.300" stroke-linejoin="round"/><circle cx="10" cy="10" r="2.300" fill="none" stroke="#333" stroke-width="1.300"/></svg>
</aside>
</div>

<footer class="taskbar">
  <div class="start"><svg viewBox="0 0 16 16"><path d="M0 2.300 6.500 1.400V7.600H0zM7.300 1.300 16 0v7.600H7.300zM0 8.400h6.500v6.200L0 13.700zM7.300 8.400H16V16l-8.700-1.200z" fill="#fff"/></svg></div>
  <div class="search"><svg class="sm" viewBox="0 0 16 16"><circle cx="10" cy="6" r="5.200" fill="none" stroke="#222" stroke-width="1.300"/><path d="M6.200 9.800.5 15.500" stroke="#222" stroke-width="1.300"/></svg><i data-w="128">Type here to search</i>
    <svg class="castle" viewBox="0 0 72 38"><path d="M0 38V31q5-7 14-6l12 1 20 3v9z" fill="#5f7d31"/><path d="M44 8V4h3v3h4V4h3v3h4V4h3v3h4V4h3v3h4v7l-2 2v22H46V16l-2-3z" fill="#b7b0dc"/><path d="M55 14h17v24H58z" fill="#8f8cc8"/><path d="M47 16q1-3 2 0v6h-2zM51 16q1-3 2 0v6h-2zM59 16q1-3 2 0v6h-2zM63 16q1-3 2 0v6h-2z" fill="#27304d"/><path d="M28 14l2-4 2-6 2 6 3 4v14h-9z" fill="#d98b3a"/><path d="M30 16h5v12h-5z" fill="#7c3f26"/><path d="M12 15l2-5 2 5v18h-4zM5 27l4-8 4 8v11H5z" fill="#d8dcee"/><circle cx="21" cy="26" r="7" fill="#c9b1dd"/><path d="M12 14l2-6 2 6zM5 26l4-9 4 9z" fill="#678ba8"/><circle cx="41" cy="35" r="11" fill="#c4a9dc"/><path d="M31 0h3v5h-3zM8 18h2v5H8zM13 8h2v4h-2zM40 22h3v7h-3zM20 17h2v4h-2z" fill="#a61e42"/><path d="M8 31q1-2 3 0v4H8z" fill="#273a55"/></svg></div>
  <div class="tk"><svg class="tv" viewBox="0 0 18 18"><path d="M1.500 1v3h10V1M1.500 17v-3h10v3M1.500 6v6h10V6zM15.500 5.500V1M15.500 16v-5" fill="none" stroke="#fff" stroke-width="1.200"/><path d="M14 6.500h3v3h-3z" fill="#fff"/></svg></div>
  <div class="tk sel"><svg viewBox="0 0 24 24"><circle cx="12" cy="12" r="12" fill="#0f7fd0"/><path d="M1 8Q4 0 12 0q11 0 12 10 0 6-6 6-4 0-3-3 1-5-5-5.500Q4 7 1 12z" fill="#35c6e0"/><path d="M14 0q10 2 10 10 0 6-6 6-4 0-3-3 2-4-2-6z" fill="#5be27b"/><path d="M8 13q2 8 14 6-4 5-10 5Q3 23 2 14q2-5 7-4z" fill="#0b4f9e"/></svg></div>
  <div class="tk run"><svg viewBox="0 0 24 24"><circle cx="12" cy="12" r="12" fill="#34a853"/><path d="M1.600 6A12 12 0 0 1 23 7H12z" fill="#ea4335"/><path d="M1.600 6L8 15l4-8z" fill="#ea4335"/><path d="M23 7a12 12 0 0 1-11 17l5-10-1-7z" fill="#fbbc04"/><circle cx="12" cy="12" r="5.800" fill="#fff"/><circle cx="12" cy="12" r="4.500" fill="#4285f4"/><circle cx="17" cy="17.500" r="7.500" fill="#ec407a"/><text x="17" y="21" text-anchor="middle" font-family="Roboto,sans-serif" font-size="9" fill="#fff">M</text></svg></div>
  <div class="tk run"><svg viewBox="0 0 24 24"><circle cx="12" cy="13.500" r="10.500" fill="#ff5d22"/><path d="M14 0q1 4 5 5 5 5 4 10-1 7-8 9 5-4 3-9-1-5-5-6-1-5 1-9z" fill="#ffd93d"/><path d="M1 12q0-6 3-9 1 3 4 3l5 3q-5 1-4 5 3 5 9 1-1 8-9 8Q2 22 1 12z" fill="#ff8a1c"/><circle cx="12" cy="12.500" r="5" fill="#7542e5"/><path d="M5 9q5-2 9 1-4 1-4 3-4 0-5-4z" fill="#ff8a1c"/></svg></div>
  <div class="tk"><svg><use href="#skype"/></svg></div>
  <div class="tk run"><svg viewBox="0 0 24 24"><circle cx="12" cy="12" r="11.500" fill="#fff"/><path d="M9.500 4v7M4 9h5" stroke="#36c5f0" stroke-width="3" stroke-linecap="round"/><path d="M14.500 4v6M14.500 9.500H20" stroke="#2eb67d" stroke-width="3" stroke-linecap="round"/><path d="M4 14.500h6M9.500 15v5" stroke="#e01e5a" stroke-width="3" stroke-linecap="round"/><circle cx="18" cy="17.500" r="6" fill="#e01e5a"/><text x="18" y="21" text-anchor="middle" font-family="Open Sans,sans-serif" font-size="9.500" fill="#fff">3</text></svg></div>
  <div class="tk"><svg viewBox="0 0 24 24"><rect x="2.500" y="2.500" width="19" height="19" rx="2.500" fill="#0079bf" stroke="#fff" stroke-width="1.200"/><path d="M6 6h5v12H6zM13 6h5v7h-5z" fill="#fff"/></svg></div>
  <div class="tk run"><svg viewBox="0 0 24 24"><path d="M1 3h8l2 2h11v16H1z" fill="#e8a810"/><path d="M1 7h21.500v14H1z" fill="#ffd45e"/><path d="M5 21v-8h14v8h-4v-4H9v4z" fill="#3592e0"/></svg></div>
  <div class="tk run"><svg><use href="#skype"/></svg></div>
  <div class="tk run"><svg viewBox="0 0 24 24"><path d="M3 0h18v24H3z" fill="#7b838b"/><path d="M5 2h14v4H5z" fill="#4fdcf5"/><path d="M5 8h4v4H5zM10 8h4v4h-4zM15 8h4v4h-4zM5 13h4v4H5zM10 13h4v4h-4zM5 18h4v4H5zM10 18h4v4h-4z" fill="#d9dee3"/><path d="M15 13h4v9h-4z" fill="#164a8a"/></svg></div>
  <div class="tk run"><svg class="wa" viewBox="0 0 36 28"><path d="M1.500 24.500l2-6A10.800 10.800 0 1 1 8 22.800z" fill="none" stroke="#25d366" stroke-width="2.400"/><path d="M8 8q2-3 3.500.5-1.500 2 1 4t4 .7q3 1 .5 3.300-3 2-7-2T8 8z" fill="#25d366"/><rect x="15.500" y="12" width="19" height="15.500" rx="7.700" fill="#2a2a2a" stroke="#777"/><text x="25" y="24.500" text-anchor="middle" font-family="Open Sans,sans-serif" font-weight="600" font-size="12" fill="#fff">11</text></svg></div>
  <div class="tray">
    <svg viewBox="0 0 16 16"><path d="M2 11l6-6 6 6"/></svg>
    <svg viewBox="0 0 16 16"><path d="M.7 3 15 1v13H.7zM5 6h6M5 6v6M10 8q-5-1-4 3"/><circle cx="12" cy="13" r="4" fill="#e81123" stroke="none"/></svg>
    <svg viewBox="0 0 16 16"><path d="M5 3h11v9H3V8M10 12v3M6 15h8M0 2h4v4H0M2 6v9"/></svg>
    <svg viewBox="0 0 16 16"><path d="M.7 5.500H3L7 2v12l-4-3.500H.7zM9.500 6q1 2 0 4M11.500 4q2.500 4 0 8M13.500 2q4 6 0 12"/></svg>
    <i class="eng" data-w="23.500">ENG</i>
    <div class="clock"><i data-w="27">14:30</i><i data-w="58">19-03-2024</i></div>
    <svg class="notif" viewBox="0 0 16 16"><path d="M0 0h16v12H7l-3 4v-4H0z" fill="#fff" stroke="none"/><path d="M3 3.500h10M3 6h10M3 8.500h6" stroke="#222"/><circle cx="13" cy="12" r="3" fill="#ddd" stroke="#222"/></svg>
    <svg class="pre" viewBox="0 0 22 20"><path d="M6 1h7q2 0 2 2l-4 9q-1 4-5 4H3q-3-1-2-5l2-7q1-3 3-3z" fill="#2a8ff0"/><path d="M4 9l5 0-2 7H3q-3-1-2-5z" fill="#4fcb6b"/><path d="M15 5h3q4 1 3 5l-2 6H9l3-8q1-3 3-3z" fill="#e366c0"/><rect x="6" y="13" width="16" height="7" rx="1.500" fill="#ffc20e"/><text x="14" y="19" text-anchor="middle" font-family="DejaVu Sans,sans-serif" font-weight="700" font-size="6.500" fill="#111">PRE</text></svg>
  </div>
</footer>
<script src="fit.js"></script>
</body>
</html>
```
FILE: styles.css
```css
* { box-sizing: border-box; }
body { margin: 0; width: 1920px; height: 1080px; overflow: hidden; background: #f7f7f7; font-family: "Open Sans", "Noto Sans", sans-serif; font-size: 12px; color: #1b1b1b; display: flex; flex-direction: column; }
.defs { position: absolute; width: 0; height: 0; }
svg { display: block; flex: none; }
i { font-style: normal; display: inline-block; white-space: nowrap; flex: none; transform-origin: 0 50%; }
p { margin: 0; }

/* browser tabs */
.tabs { height: 32px; flex: none; background: #cdcdcd; display: flex; align-items: center; border-bottom: 1px solid #bdbdbd; }
.profile { width: 22px; height: 22px; margin-left: 11px; }
.workspace { width: 15px; height: 15px; margin: 0 15px 0 20px; }
.tab { width: 101.75px; height: 32px; flex: none; display: flex; align-items: center; padding-left: 10px; position: relative; }
.tab.late { width: 101.1px; }
.tab::before { content: ""; position: absolute; left: -1px; top: 6px; width: 1px; height: 20px; background: #7c7c7c; }
.tab svg { width: 16px; height: 16px; }
.tab.idle svg:first-child { opacity: .5; }
.tab b { font-weight: 400; width: 37px; margin-left: 10px; overflow: hidden; line-height: 18px; -webkit-mask-image: linear-gradient(90deg, #000 60%, transparent 100%); mask-image: linear-gradient(90deg, #000 60%, transparent 100%); }
.tab svg.x { width: 10px; height: 10px; margin-left: 9px; }
.tab.active { width: 100.5px; background: #f7f7f7; border-radius: 6px 6px 0 0; }
.tab.active::before, .tab.active + .tab::before { display: none; }
.newtab { border-left: 1px solid #7c7c7c; height: 20px; display: flex; align-items: center; padding-left: 11px; }
.newtab svg { width: 14px; height: 14px; }
.winctl { margin-left: auto; display: flex; gap: 34px; padding-right: 17px; }
.winctl svg { width: 12px; height: 12px; }

/* address row */
.navbar { height: 38px; flex: none; display: flex; align-items: center; padding: 0 10px 0 18px; }
.navbar svg { width: 18px; height: 18px; fill: none; stroke: #222; stroke-width: 1.2; }
.navbar > svg { margin-right: 26.5px; }
.address { width: 1508px; margin-left: -7px; height: 30px; border-radius: 15px; background: #fff; display: flex; align-items: center; padding: 0 16px 0 19px; box-shadow: 0 0 2px #ddd; font-size: 14px; color: #6b6b6b; }
.address .lock { width: 13px; height: 16px; stroke: #555; }
.url { display: flex; align-items: center; margin-left: 16px; flex: 1; line-height: 18px; padding-bottom: 1px; }
.url .host { color: #111; }
.url svg { width: 16px; height: 16px; margin: 1px 1.5px 0 1px; stroke: none; }
.address .aloud, .address .star { stroke: #777; }
.address .star { margin-left: 22px; }
.tools { display: flex; align-items: center; gap: 26.5px; margin-left: auto; }
.tools svg.more { width: 24px; height: 24px; margin-right: -10px; }
.tools svg.copilot { width: 24px; height: 26px; stroke: none; }

.bookmarks { height: 34px; flex: none; display: flex; align-items: center; gap: 17px; padding: 0 59px 2px 14px; font-size: 12px; }
.bookmarks span { display: flex; align-items: center; gap: 8px; }
.bookmarks i { line-height: 16px; margin-top: -1px; }
.bookmarks svg { width: 16px; height: 16px; }
.bookmarks .other { margin-left: auto; border-left: 1px solid #ccc; padding-left: 9px; }

.middle { height: 936px; flex: none; display: flex; padding-left: 4px; }
.figma { width: 1872px; height: 932px; background: #fff; border-radius: 8px; overflow: hidden; box-shadow: 0 0 2px 1px #d4d4d4; font-family: Inter, sans-serif; font-size: 11px; display: flex; flex-direction: column; }
.ftool { height: 48px; flex: none; background: #2c2c2c; color: #fff; display: flex; align-items: center; }
.c8 { width: 8px; height: 8px; }
.fmenu { width: 52px; display: flex; align-items: center; gap: 6px; padding-left: 15px; }
.flogo { width: 11px; height: 16px; }
.fsel { width: 40px; height: 48px; background: #0d99ff; display: flex; align-items: center; justify-content: center; }
.fsel svg { width: 16px; height: 16px; }
.fbtn { width: 39.5px; display: flex; justify-content: center; }
.fbtn svg { width: 20px; height: 20px; }
.fbtn svg.s18 { width: 18px; height: 18px; }
.ftitle { margin-left: 645px; display: flex; align-items: center; font-size: 14px; font-weight: 500; }
.ftitle svg { width: 15px; height: 15px; margin-right: 6px; }
.ftitle svg.c8 { width: 8px; height: 8px; margin: 0 21px 0 11px; }
.ask { height: 32px; width: 81px; border: 1px solid #fff; border-radius: 6px; display: flex; align-items: center; justify-content: center; font-size: 11px; font-weight: 600; }
.fright { margin-left: auto; display: flex; align-items: center; font-weight: 500; padding-right: 13px; }
.who { width: 50px; height: 32px; border-radius: 16px; background: #383838; display: flex; align-items: center; padding-left: 4px; gap: 7px; }
.who em { width: 24px; height: 24px; border-radius: 50%; background: #f24822; font-style: normal; line-height: 24px; text-align: center; font-size: 12px; }
.share { width: 54px; height: 32px; margin-left: 8px; border-radius: 6px; background: #0d99ff; display: flex; align-items: center; justify-content: center; font-weight: 600; }
.toggle { width: 56px; height: 32px; margin-left: 8px; border-radius: 16px; background: #444; display: flex; align-items: center; padding-left: 4px; }
.toggle svg { width: 24px; height: 24px; }
.play { width: 12px; height: 14px; margin: 0 7px 0 24px; }
.zoom { margin-left: 13.5px; }
.c8.last { margin-left: 5px; }

.fbody { flex: 1; display: flex; min-height: 0; }
.left { width: 248px; flex: none; border-right: 1px solid #e5e5e5; background: #fff; overflow: hidden; }
.pages { height: 212px; padding-top: 4px; border-bottom: 1px solid #e5e5e5; }
.row { height: 32px; display: flex; align-items: center; padding-left: 18px; color: #4d4d4d; letter-spacing: .1px; }
.row svg { width: 12px; height: 12px; margin-right: 10px; }
.row svg.dark { color: #222; }
.row svg.c8 { width: 8px; height: 8px; margin: 0 0 0 4px; color: #888; }
.up { transform: rotate(180deg); }
.row.strong { font-weight: 600; color: #1e1e1e; }
.row.comp { color: #8638e5; font-weight: 500; }
.row.page { padding-left: 41px; }
.row.page svg { width: 13px; height: 13px; margin-right: 4px; }
.row.current { color: #111; padding-left: 18px; }
.row.page svg.tick { width: 9px; height: 9px; margin-right: 14px; }

/* canvas */
.canvas { width: 1383px; flex: none; background: #1e1e1e; position: relative; overflow: hidden; color: #000; }
.label, .label-cut { position: absolute; top: 112px; height: 32px; border: 1.5px solid #0000e6; border-radius: 4px; }
.label { left: 15px; width: 112px; display: flex; align-items: center; justify-content: center; font-size: 14px; color: #0000e6; }
.label i { line-height: 18px; margin-top: -2px; }
.label-cut { left: -12px; width: 17px; }
.board { position: absolute; top: 0; width: 462px; background: #fff; overflow: hidden; }
.home { left: 211px; height: 869px; display: flex; flex-direction: column; }
.detail { left: 722px; height: 884px; }
.table { left: 1233px; height: 869px; background: #f2f2fe; }
.bluebar { height: 20.5px; flex: none; background: #33f; }
.games { height: 93.5px; flex: none; padding: 9.5px 0 0 19px; display: flex; gap: 19px; font-size: 11px; }
.game { width: 50px; height: 74px; display: flex; flex-direction: column; align-items: center; }
.game svg { width: 50px; height: 50px; }
.game i { line-height: 16px; }
.game.on { border-bottom: 4px solid #00f; }
.days { height: 57px; flex: none; background: #e5e5e5; display: flex; gap: 13.6px; padding-top: 14px; font-size: 11px; }
.days div { display: flex; flex-direction: column; align-items: center; flex: none; }
.days div:first-child { margin-left: -.5px; }
.days i { line-height: 15px; }
.days .today { color: #00f; }
.days .today i:first-child { font-size: 15.5px; font-weight: 800; line-height: 16px; padding-bottom: 5px; height: 21px; margin-top: -1px; }
.league { height: 79px; flex: none; display: flex; position: relative; font-size: 11.5px; }
.lolbg { margin-top: 11px; margin-bottom: 7px; background: #dae5e5; }
.dotabg { margin-top: 24px; margin-bottom: 5px; background: #e5dada; }
.lmark { width: 24px; height: 24px; margin: 28.5px 25.5px 0 25.5px; }
.lmark.dota { width: 27px; height: 31px; margin: 25px 24px 0 24px; }
.ltext { padding-top: 13px; display: flex; flex-direction: column; }
.ltext i { line-height: 18.6px; align-self: flex-start; }
.bold { font-weight: 800; }
.thin { font-weight: 300; color: #222; }
.teal { color: #0fa3b1; }
.red { color: #ec4437; }
.count { margin-left: auto; padding: 41px 15.5px 0 0; display: flex; align-items: center; height: 62px; gap: 5px; font-size: 14.5px; position: absolute; right: 0; }
.count u { width: 9px; height: 9px; border-radius: 50%; background: #34c08b; }
.match { flex: none; background: #f2f2fe; display: flex; font-size: 14.5px; }
.boxed { margin: 0 5px 5.5px; height: 92.5px; border-radius: 4px; }
.full { height: 94px; }
.status { width: 92px; padding: 0 0 2px 19px; display: flex; flex-direction: column; justify-content: center; align-items: flex-start; font-size: 13.5px; }
.full .status { padding-left: 25px; }
.status.live { padding: 6px 0 0 17.5px; color: #ff3838; font-weight: 300; gap: 5px; }
.live svg { width: 17px; height: 12px; margin-left: 24px; }
.teams { flex: 1; display: flex; flex-direction: column; gap: 14.5px; padding-top: 8px; }
.full .teams { padding-top: 10px; }
.teams div { display: flex; align-items: center; gap: 9px; height: 30px; }
.logo { width: 30px; height: 30px; border-radius: 50%; background: #34c08b; box-shadow: 4px 4px 18px rgba(0,0,0,.14); display: flex; align-items: center; justify-content: center; color: #fff; font-size: 5px; font-weight: 700; flex: none; line-height: 1; }
.logo.blue { background: #00f; }
.logo.big { width: 40px; height: 40px; }
.logo.sm { width: 20px; height: 20px; font-size: 3.5px; }
.logo.crimson { background: #bf3a43; }
.logo.redc { background: #ec4637; }
.logo.lilac { background: #b3b0ff; }
.name { line-height: 20px; font-weight: 500; }
.score { width: 62px; display: flex; flex-direction: column; align-items: flex-start; gap: 14.5px; padding-top: 8px; }
.score i { line-height: 30px; }
.full .score { padding-top: 10px; width: 72px; color: #fff; font-weight: 500; }
.bottomnav { margin-top: auto; height: 102px; background: #33f; display: flex; color: #b3b3b3; font-size: 11px; }
.bottomnav div { flex: 1; display: flex; flex-direction: column; align-items: center; padding-top: 29px; }
.bottomnav div:last-child { padding-top: 21px; }
.bottomnav svg { width: 24px; height: 24px; margin-bottom: 7px; }
.bottomnav i { line-height: 16px; }
.bottomnav .on { color: #fff; border-bottom: 3px solid #fff; font-weight: 500; }
.selection { position: absolute; left: 209.5px; top: 181.5px; width: 464.5px; height: 278.5px; border: 2px solid #0d99ff; }
.spacing { position: absolute; left: 212px; top: 261px; width: 461px; height: 6px; border-top: 1px dotted #0d99ff; border-bottom: 1px dotted #0d99ff; }
.hscroll { position: absolute; left: 106px; top: 872px; width: 120px; height: 8px; border: 1px solid #666; border-radius: 4px; background: #141414; }
.vscroll { position: absolute; left: 1371px; top: 209.5px; width: 8px; height: 40px; border: 1px solid #555; border-radius: 4px; background: #000; }

.week { height: 49.5px; background: #f7f7f7; display: flex; align-items: center; justify-content: space-between; padding: 0 31px 2px 20.5px; font-size: 14.5px; }
.week i { font-weight: 500; }
.week svg { width: 8px; height: 12px; }
.versus { height: 105.5px; background: #fff; display: flex; justify-content: space-between; padding: 19px 20.5px 0; font-size: 14.5px; }
.side { width: 98px; display: flex; flex-direction: column; align-items: center; gap: 8px; }
.when { margin-top: -12px; color: #888; font-size: 11px; display: flex; flex-direction: column; align-items: center; line-height: 18px; padding-left: 32px; }
.when s { width: 17px; height: 4px; background: #000; margin: 25px 32px 0 0; }
.video { height: 202px; background: #000; display: flex; align-items: center; justify-content: center; }
.video svg { width: 66px; height: 66px; margin-left: 1px; }
.dtabs { height: 38px; background: #fff; border-bottom: 1px solid #ececec; display: flex; padding-left: 20px; font-size: 11px; color: #888; }
.dtabs span { padding: 4px 10px 0; height: 38px; display: flex; align-items: center; margin-right: 9.8px; }
.dtabs span.sel { color: #00f; border-bottom: 1.5px solid #00f; font-weight: 500; }
.accordion { height: 58px; background: #f2f2fe; display: flex; align-items: center; justify-content: space-between; padding: 8px 29px 0 20.5px; font-size: 14px; color: #222; }
.accordion svg { width: 12px; height: 8px; }
.stats { margin: 14.5px 20px 0; font-size: 10.5px; font-weight: 500; }
.stats > div { display: flex; height: 40.6px; border-bottom: 1px solid #e5e5e5; }
.stats p { width: 157.5px; flex: none; display: flex; align-items: center; padding: 0 0 1px 12px; border-left: 1px solid #e5e5e5; }
.stats p:last-child { width: 151.5px; }
.stats p:first-child { width: 113px; border: 0; }
.stats .hd p { padding: 1px 0 0 9px; gap: 10px; font-size: 13.5px; }
.dtabs.second { margin-top: 18.5px; }
.dtabs.second span { margin-right: 20px; }
.stats.lower { margin-top: 19.5px; }
.thead { margin-top: 12px; height: 37px; background: #e6e6e6; display: flex; align-items: center; font-size: 11.5px; font-weight: 500; }
.thead b { width: 44px; display: flex; justify-content: center; margin-right: 34px; }
.trow { height: 44.35px; background: #fff; display: flex; align-items: center; font-size: 8.5px; font-weight: 500; }
.trow.tint { background: #eaf6f1; }
.trow b { width: 43px; text-align: center; font-weight: 500; font-size: 11px; margin-right: 15px; transform: scaleX(1.15); }
.trow .logo { margin-right: 9px; }
.trow.d b { margin-right: 14px; }

.right { flex: 1; border-left: 1px solid #e5e5e5; background: #fff; position: relative; }
.rtabs { height: 41px; border-bottom: 1px solid #e5e5e5; display: flex; gap: 15.5px; align-items: center; padding-left: 16px; color: #8a8a8a; }
.rtabs .cur { color: #111; font-weight: 600; }
.rsearch { height: 40px; border-bottom: 1px solid #e5e5e5; display: flex; align-items: center; padding: 0 17px 0 16px; color: #777; }
.rsearch svg.m { width: 12px; height: 12px; margin-right: 8px; }
.rsearch .filter { width: 17px; height: 17px; margin-left: auto; margin-right: 17px; fill: none; stroke: #222; }
.rsearch .sliders { width: 14px; height: 16px; fill: none; stroke: #222; stroke-width: 1.1; }
.rnote { display: flex; padding: 16px 0 0 16px; color: #4a4a4a; gap: 10px; }
.rnote svg { width: 18px; height: 18px; margin-top: 1px; color: #222; }
.rnote p { display: flex; flex-direction: column; align-items: flex-start; }
.rnote i { line-height: 16px; }
.help { position: absolute; right: 16px; bottom: 16px; width: 32px; height: 32px; border-radius: 50%; background: #1e1e1e; color: #fff; font-size: 18px; font-weight: 300; line-height: 32px; text-align: center; }

.edgebar { width: 44px; display: flex; flex-direction: column; align-items: center; padding: 18px 0 0; margin-top: -36px; height: 972px; gap: 20px; position: relative; }
.edgebar svg { width: 19px; height: 20px; }
.edgebar svg:first-child { margin-bottom: 1px; margin-top: -5px; }
.edgebar hr { width: 28px; height: 1px; border: 0; background: #b5b5b5; margin: 2px 0 1px; }
.edgebar .gap { flex: 1; }
.edgebar svg.gear { width: 17px; height: 18px; margin-bottom: 13px; margin-top: -7px; }

/* taskbar */
.taskbar { height: 40px; flex: none; background: #1e1e1e; display: flex; }
.start { width: 48px; display: flex; align-items: center; justify-content: center; }
.start svg { width: 16px; height: 16px; }
.search { width: 288px; background: #f2f2f2; border: 1px solid #bbb; display: flex; align-items: center; padding-left: 11px; font-size: 15px; color: #333; }
.search .sm { width: 17px; height: 17px; margin-right: 11px; }
.search .castle { width: 72px; height: 38px; margin-left: auto; margin-right: 4px; }
.tk { width: 49px; display: flex; align-items: center; justify-content: center; position: relative; }
.tk svg { width: 24px; height: 24px; }
.tk svg.tv { width: 18px; height: 18px; margin-right: 2px; }
.tk svg.wa { width: 36px; height: 28px; margin: 4px 0 0 10px; }
.tk.sel { background: #4a4a4a; border-bottom: 2px solid #76b9ed; margin-left: 1px; padding-top: 2px; }
.tk.run::after { content: ""; position: absolute; left: 5px; right: 4px; bottom: 0; height: 2px; background: #76b9ed; }
.tray { margin-left: auto; display: flex; align-items: center; color: #fff; padding-right: 10px; border-right: 1px solid #666; margin-right: 4px; }
.tray svg { width: 16px; height: 16px; margin-right: 8px; fill: none; stroke: #fff; stroke-width: 1.1; }
.eng { margin-left: 2px; }
.clock { width: 58px; display: flex; flex-direction: column; align-items: center; line-height: 18px; margin: 0 18px 0 13.5px; }
.tray .notif { margin-right: 21px; }
.tray .pre { width: 22px; height: 20px; margin: 0 6px 0 0; stroke: none; }
```
FILE: fit.js
```js
// Stretch or squeeze each label horizontally to its designed width.
document.querySelectorAll('[data-w]').forEach(function (el) {
  var natural = el.getBoundingClientRect().width;
  var wanted = parseFloat(el.dataset.w);
  el.style.transform = 'scaleX(' + wanted / natural + ')';
  el.style.marginRight = (wanted - natural) + 'px';
});
```
